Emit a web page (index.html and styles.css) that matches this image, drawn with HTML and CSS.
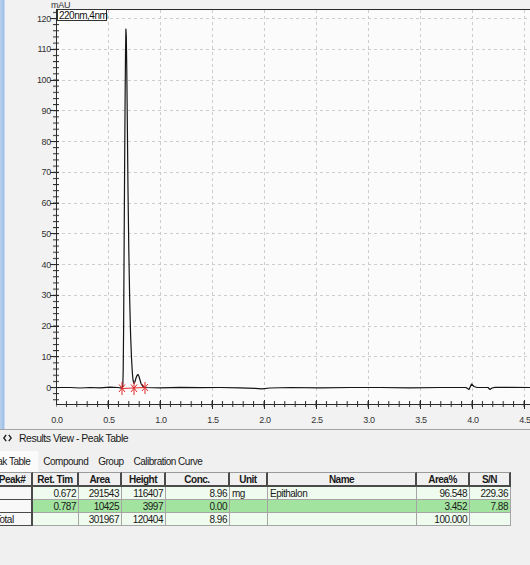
FILE: index.html
```html
<!DOCTYPE html>
<html>
<head>
<meta charset="utf-8">
<title>Results View - Peak Table</title>
<link rel="stylesheet" href="styles.css">
</head>
<body>
<section class="chart-panel">
  <div class="side-strip"></div>
  <svg class="chart" viewBox="5 0 525 429" width="525" height="429" xmlns="http://www.w3.org/2000/svg">
    <defs>
      <pattern id="ytick" patternUnits="userSpaceOnUse" x="0" y="387" width="10" height="6.15">
        <rect x="0" y="0" width="10" height="1" fill="#2a2a2a"/>
      </pattern>
      <pattern id="xtick" patternUnits="userSpaceOnUse" x="55.5" y="0" width="10.4" height="10">
        <rect x="0" y="0" width="1" height="10" fill="#2a2a2a"/>
      </pattern>
    </defs>
    <rect x="5" y="0" width="525" height="429" fill="#f2f2f2"/>
    <rect x="56" y="9" width="474" height="395" fill="#fbfbfb"/>
    <g class="grid" shape-rendering="crispEdges">
      <path d="M56,356.75H530 M56,326H530 M56,295.25H530 M56,264.5H530 M56,233.75H530 M56,203H530 M56,172.25H530 M56,141.5H530 M56,110.75H530 M56,80H530 M56,49.25H530 M56,18.5H530 M108,10V404 M160,10V404 M212,10V404 M264,10V404 M316,10V404 M368,10V404 M420,10V404 M472,10V404 M524,10V404"/>
    </g>
    <g class="axes" shape-rendering="crispEdges">
      <path d="M56,9H530 M56,9V405 M56,404.5H530"/>
      <path d="M50,387.5h9 M50,356.75h9 M50,326h9 M50,295.25h9 M50,264.5h9 M50,233.75h9 M50,203h9 M50,172.25h9 M50,141.5h9 M50,110.75h9 M50,80h9 M50,49.25h9 M50,18.5h9 M108,400v9 M160,400v9 M212,400v9 M264,400v9 M316,400v9 M368,400v9 M420,400v9 M472,400v9 M524,400v9"/>
    </g>
    <rect x="53" y="11" width="6" height="394" fill="url(#ytick)" shape-rendering="crispEdges"/>
    <rect x="56" y="401" width="474" height="6" fill="url(#xtick)" shape-rendering="crispEdges"/>
    <g class="ylabels">
      <text x="51" y="390.5">0</text>
      <text x="51" y="359.75">10</text>
      <text x="51" y="329">20</text>
      <text x="51" y="298.25">30</text>
      <text x="51" y="267.5">40</text>
      <text x="51" y="236.75">50</text>
      <text x="51" y="206">60</text>
      <text x="51" y="175.25">70</text>
      <text x="51" y="144.5">80</text>
      <text x="51" y="113.75">90</text>
      <text x="51" y="83">100</text>
      <text x="51" y="52.25">110</text>
      <text x="51" y="21.5">120</text>
    </g>
    <g class="xlabels">
      <text x="57" y="423">0.0</text>
      <text x="109" y="423">0.5</text>
      <text x="161" y="423">1.0</text>
      <text x="213" y="423">1.5</text>
      <text x="265" y="423">2.0</text>
      <text x="317" y="423">2.5</text>
      <text x="369" y="423">3.0</text>
      <text x="421" y="423">3.5</text>
      <text x="473" y="423">4.0</text>
      <text x="525" y="423">4.5</text>
    </g>
    <text class="unit-label" x="51" y="8">mAU</text>
    <rect x="57.5" y="9.5" width="49" height="11" fill="#ffffff" stroke="#333333" shape-rendering="crispEdges"/>
    <text class="channel-label" x="59" y="18.5">220nm,4nm</text>
    <path class="trace" d="M57,387.5 L70,387.5 L80,388 L90,387.5 L100,387.8 L110,387.2 L118,387.5 L121.5,388.2 L122.8,386 L123.2,370 L123.6,330 L124.1,250 L124.6,170 L125.1,100 L125.5,55 L125.9,29 L126.3,36 L126.8,72 L127.4,130 L128,190 L128.8,250 L129.7,300 L130.6,335 L131.5,358 L132.3,372 L133,380 L134,383.5 L135,381.5 L136,378 L137,375.5 L138,374.5 L139,376.5 L140,380 L141,383.5 L142.5,386 L144,387.3 L146,387.5 L160,387.8 L180,387.3 L200,387.6 L220,387.5 L240,387.8 L255,388.3 L262,388.8 L270,388 L290,387.5 L320,387.8 L350,387.5 L380,387.5 L410,387.8 L440,387.5 L466,387.5 L469,389.5 L471.5,384 L474,386.5 L477,387.5 L488,387.5 L490,389.5 L492,388 L495,387.3 L530,387.5"/>
    <g class="integration">
      <path d="M121.5,388.5 L145,387.5"/>
      <path d="M122,382V395 M119,384.5L125,392 M125,384.5L119,392"/>
      <path d="M134,382V395 M131,384.5L137,392 M137,384.5L131,392"/>
      <path d="M145,382V394 M142,384L148,391 M148,384L142,391"/>
    </g>
  </svg>
</section>

<section class="results">
  <header class="results-title">
    <svg class="nav-icon" width="9" height="8" viewBox="0 0 9 8" xmlns="http://www.w3.org/2000/svg">
      <path d="M3.2,0.8 L0.8,4 L3.2,7.2 M5.8,0.8 L8.2,4 L5.8,7.2" fill="none" stroke="#222" stroke-width="1.4"/>
    </svg>
    <span>Results View - Peak Table</span>
  </header>
  <nav class="tabs">
    <span class="tab active">Peak Table</span>
    <span class="tab">Compound</span>
    <span class="tab">Group</span>
    <span class="tab">Calibration Curve</span>
  </nav>
  <table class="peak-table">
    <colgroup>
      <col class="c-peak"><col class="c-ret"><col class="c-area"><col class="c-height"><col class="c-conc"><col class="c-unit"><col class="c-name"><col class="c-pct"><col class="c-sn">
    </colgroup>
    <thead>
      <tr>
        <th>Peak#</th><th>Ret. Tim</th><th>Area</th><th>Height</th><th>Conc.</th><th>Unit</th><th>Name</th><th>Area%</th><th>S/N</th>
      </tr>
    </thead>
    <tbody>
      <tr class="row-light">
        <td class="rowhead"></td><td>0.672</td><td>291543</td><td>116407</td><td>8.96</td><td class="left">mg</td><td class="left">Epithalon</td><td>96.548</td><td>229.36</td>
      </tr>
      <tr class="row-sel">
        <td class="rowhead"></td><td>0.787</td><td>10425</td><td>3997</td><td>0.00</td><td class="left"></td><td class="left"></td><td>3.452</td><td>7.88</td>
      </tr>
      <tr class="row-light">
        <td class="rowhead">Total</td><td></td><td>301967</td><td>120404</td><td>8.96</td><td class="left"></td><td class="left"></td><td>100.000</td><td></td>
      </tr>
    </tbody>
  </table>
</section>
</body>
</html>
```

FILE: styles.css
```css
* {
  box-sizing: border-box;
}

html,
body {
  margin: 0;
  padding: 0;
}

body {
  width: 530px;
  height: 565px;
  overflow: hidden;
  background: #f0f0f0;
  font-family: "Liberation Sans", Arial, sans-serif;
  color: #1a1a1a;
}

.chart-panel {
  display: flex;
  height: 429px;
}

.side-strip {
  width: 5px;
  flex: none;
  background: linear-gradient(to right, #b9d1ee, #a2c1e7 70%, #d6e4f4);
}

.chart {
  display: block;
  flex: none;
}

.chart .grid path {
  fill: none;
  stroke: #cdcdcd;
  stroke-width: 1;
  stroke-dasharray: 3 3;
}

.chart .axes path {
  fill: none;
  stroke: #2a2a2a;
  stroke-width: 1;
}

.chart .ylabels text {
  font-family: "Liberation Sans", Arial, sans-serif;
  font-size: 9px;
  letter-spacing: -0.3px;
  fill: #333333;
  text-anchor: end;
}

.chart .xlabels text {
  font-family: "Liberation Sans", Arial, sans-serif;
  font-size: 9px;
  letter-spacing: -0.3px;
  fill: #333333;
  text-anchor: middle;
}

.chart .unit-label {
  font-family: "Liberation Sans", Arial, sans-serif;
  font-size: 9px;
  letter-spacing: -0.3px;
  fill: #333333;
}

.chart .channel-label {
  font-family: "Liberation Sans", Arial, sans-serif;
  font-size: 10px;
  letter-spacing: -0.5px;
  fill: #111111;
}

.chart .trace {
  fill: none;
  stroke: #151515;
  stroke-width: 1.2;
  stroke-linejoin: round;
}

.chart .integration path {
  fill: none;
  stroke: #e02a2a;
  stroke-width: 1;
}

.results {
  border-top: 1px solid #a3a3a3;
}

.results-title {
  display: flex;
  align-items: center;
  gap: 7px;
  height: 16px;
  padding-left: 3px;
  font-size: 10.5px;
  letter-spacing: -0.5px;
  color: #1a1a1a;
}

.nav-icon {
  display: block;
  flex: none;
}

.tabs {
  display: flex;
  height: 21px;
  margin-top: 5px;
  margin-left: -20px;
  font-size: 10px;
  letter-spacing: -0.5px;
}

.tab {
  padding: 0 5px;
  line-height: 21px;
  white-space: nowrap;
}

.tab.active {
  background: #fbfbfb;
  padding-left: 6px;
  padding-right: 8px;
}

.peak-table {
  margin-left: -7px;
  width: 518px;
  table-layout: fixed;
  border-collapse: separate;
  border-spacing: 0;
  font-size: 10px;
  letter-spacing: -0.5px;
  color: #1a1a1a;
}

.c-peak { width: 40px; }
.c-ret { width: 46px; }
.c-area { width: 43px; }
.c-height { width: 44px; }
.c-conc { width: 64px; }
.c-unit { width: 38px; }
.c-name { width: 149px; }
.c-pct { width: 53px; }
.c-sn { width: 41px; }

.peak-table th {
  height: 15px;
  padding: 0 2px;
  background: #f0f0f0;
  border-top: 1px solid #9a9a9a;
  border-right: 2px solid #4a4a4a;
  border-bottom: 2px solid #4a4a4a;
  font-weight: bold;
  text-align: center;
  white-space: nowrap;
  overflow: hidden;
}

.peak-table td {
  height: 13px;
  padding: 0 2px;
  border-right: 1px solid #a5a5a5;
  border-bottom: 1px solid #a5a5a5;
  text-align: right;
  white-space: nowrap;
  overflow: hidden;
  line-height: 11px;
}

.peak-table td.left {
  text-align: left;
}

.peak-table td.rowhead {
  background: #f8f8f8;
  text-align: left;
  border-right: 2px solid #4a4a4a;
  border-bottom: 1px solid #4a4a4a;
}

.row-light td {
  background: #effbee;
}

.row-sel td {
  background: #a3e3a0;
}
```
